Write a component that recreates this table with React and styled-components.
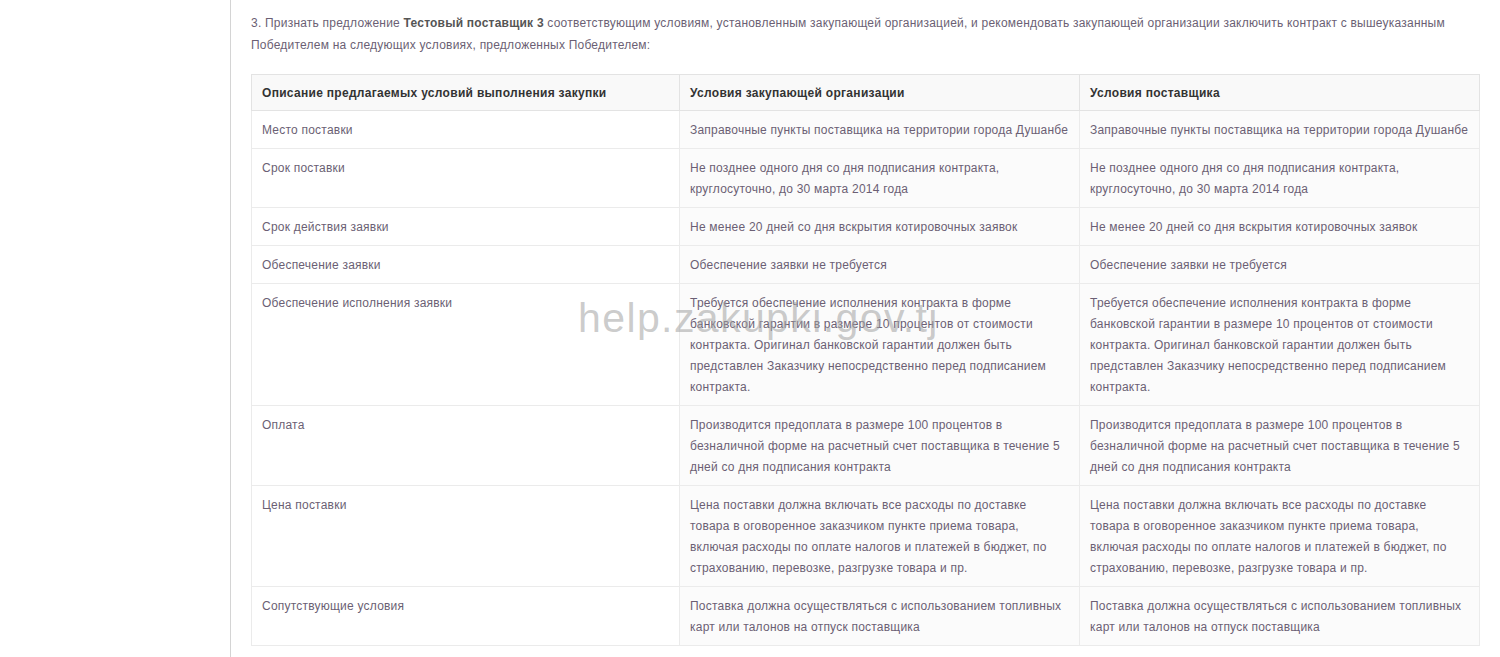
import React from 'react'
import styled, { createGlobalStyle } from 'styled-components'

const GlobalStyle = createGlobalStyle`
  html, body {
    margin: 0;
    padding: 0;
    background: #fff;
  }
  body {
    font-family: "Liberation Sans", Arial, sans-serif;
    font-size: 12px;
    letter-spacing: 0.22px;
    color: #6b5f74;
  }
`;

const Page = styled.div`
  position: relative;
  display: flex;
  min-height: 657px;
  overflow: hidden;
`;

const Sidebar = styled.div`
  width: 230px;
  flex-shrink: 0;
  border-right: 1px solid #d4d4d4;
`;

const Content = styled.div`
  flex: 1;
  padding: 12px 21px 0 20px;
`;

const Intro = styled.p`
  margin: 0 0 18px;
  line-height: 22px;

  span {
    display: block;
    white-space: nowrap;
  }

  b {
    color: #555;
  }
`;

const Table = styled.table`
  width: 1228px;
  border-collapse: collapse;
  table-layout: fixed;
  border: 1px solid #dedede;
`;

const Th = styled.th`
  text-align: left;
  font-weight: bold;
  letter-spacing: 0.3px;
  color: #333;
  background: #f9f9f9;
  padding: 9px 10px 7px;
  line-height: 19px;
  border: 1px solid #e3e3e3;
  white-space: nowrap;
`;

const Td = styled.td`
  vertical-align: top;
  padding: 9px 10px 7px;
  line-height: 21px;
  border: 1px solid #ebebeb;
  background: ${p => (p.$shaded ? '#fbfbfb' : '#fff')};

  span {
    display: block;
    white-space: nowrap;
  }
`;

const Watermark = styled.div`
  position: absolute;
  left: 578px;
  top: 298px;
  font-family: "Liberation Sans", Arial, sans-serif;
  font-size: 41px;
  letter-spacing: 1.4px;
  line-height: 41px;
  color: rgba(160, 160, 160, 0.55);
  pointer-events: none;
  white-space: nowrap;
`;

const rows = [
  {
    name: 'Место поставки',
    lines: ['Заправочные пункты поставщика на территории города Душанбе'],
  },
  {
    name: 'Срок поставки',
    lines: ['Не позднее одного дня со дня подписания контракта,', 'круглосуточно, до 30 марта 2014 года'],
  },
  {
    name: 'Срок действия заявки',
    lines: ['Не менее 20 дней со дня вскрытия котировочных заявок'],
  },
  {
    name: 'Обеспечение заявки',
    lines: ['Обеспечение заявки не требуется'],
  },
  {
    name: 'Обеспечение исполнения заявки',
    lines: [
      'Требуется обеспечение исполнения контракта в форме',
      'банковской гарантии в размере 10 процентов от стоимости',
      'контракта. Оригинал банковской гарантии должен быть',
      'представлен Заказчику непосредственно перед подписанием',
      'контракта.',
    ],
  },
  {
    name: 'Оплата',
    lines: [
      'Производится предоплата в размере 100 процентов в',
      'безналичной форме на расчетный счет поставщика в течение 5',
      'дней со дня подписания контракта',
    ],
  },
  {
    name: 'Цена поставки',
    lines: [
      'Цена поставки должна включать все расходы по доставке',
      'товара в оговоренное заказчиком пункте приема товара,',
      'включая расходы по оплате налогов и платежей в бюджет, по',
      'страхованию, перевозке, разгрузке товара и пр.',
    ],
  },
  {
    name: 'Сопутствующие условия',
    lines: [
      'Поставка должна осуществляться с использованием топливных',
      'карт или талонов на отпуск поставщика',
    ],
  },
];

const Lines = ({ lines }) => lines.map((l, i) => <span key={i}>{l}</span>);

const App = () => {
  return (
    <>
      <GlobalStyle />
      <Page>
        <Sidebar />
        <Content>
          <Intro>
            <span>
              3. Признать предложение <b>Тестовый поставщик 3</b> соответствующим условиям, установленным закупающей
              организацией, и рекомендовать закупающей организации заключить контракт с вышеуказанным
            </span>
            <span>Победителем на следующих условиях, предложенных Победителем:</span>
          </Intro>
          <Table>
            <colgroup>
              <col style={{ width: 428 }} />
              <col style={{ width: 400 }} />
              <col style={{ width: 400 }} />
            </colgroup>
            <thead>
              <tr>
                <Th>Описание предлагаемых условий выполнения закупки</Th>
                <Th>Условия закупающей организации</Th>
                <Th>Условия поставщика</Th>
              </tr>
            </thead>
            <tbody>
              {rows.map(r => (
                <tr key={r.name}>
                  <Td>{r.name}</Td>
                  <Td $shaded>
                    <Lines lines={r.lines} />
                  </Td>
                  <Td $shaded>
                    <Lines lines={r.lines} />
                  </Td>
                </tr>
              ))}
            </tbody>
          </Table>
        </Content>
        <Watermark>help.zakupki.gov.tj</Watermark>
      </Page>
    </>
  );
}

export default App
